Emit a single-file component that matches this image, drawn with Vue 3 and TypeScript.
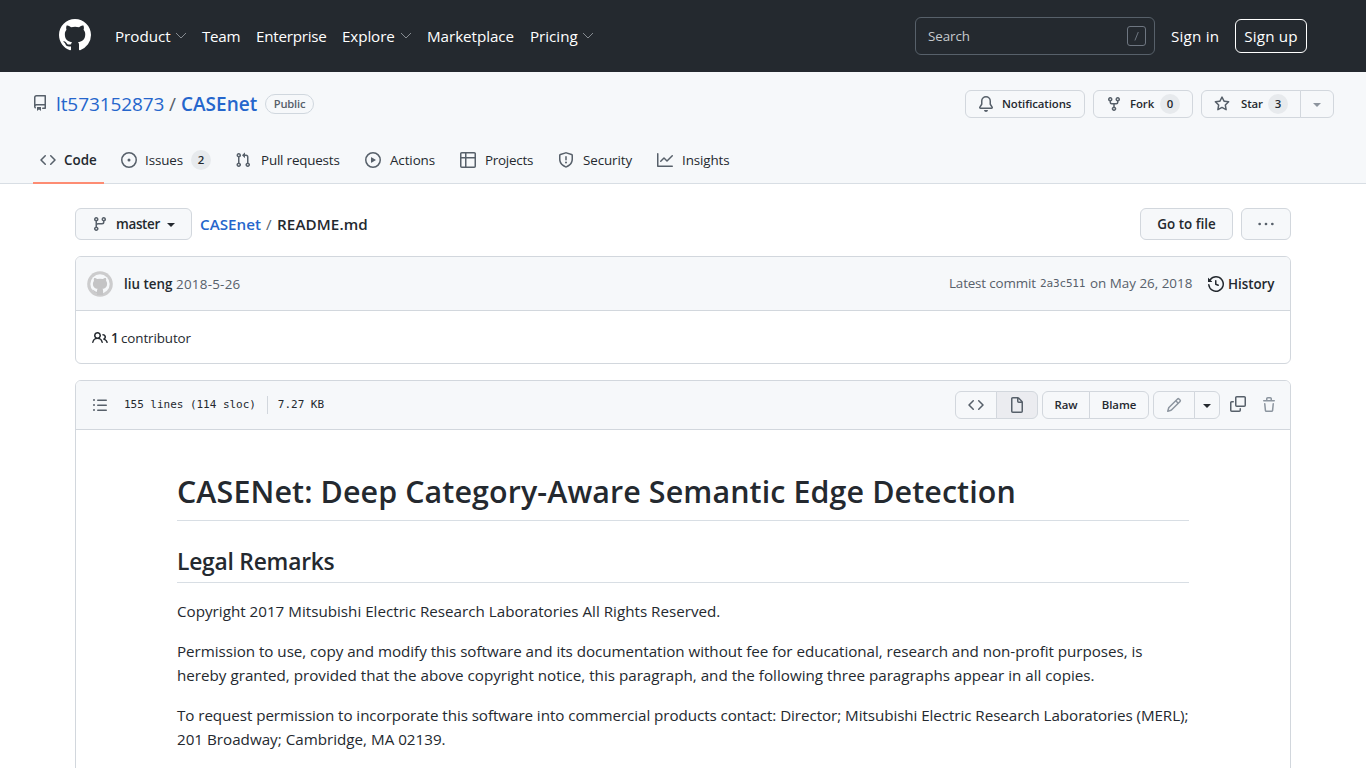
<script setup lang="ts">
import { h, type FunctionalComponent } from 'vue'

const paths: Record<string, string> = {
  mark: 'M8 0C3.58 0 0 3.58 0 8c0 3.54 2.29 6.53 5.47 7.59.4.07.55-.17.55-.38 0-.19-.01-.82-.01-1.49-2.01.37-2.53-.49-2.69-.94-.09-.23-.48-.94-.82-1.13-.28-.15-.68-.52-.01-.53.63-.01 1.08.58 1.23.82.72 1.21 1.87.87 2.33.66.07-.52.28-.87.51-1.07-1.78-.2-3.64-.89-3.64-3.95 0-.87.31-1.59.82-2.15-.08-.2-.36-1.02.08-2.12 0 0 .67-.21 2.2.82.64-.18 1.32-.27 2-.27.68 0 1.36.09 2 .27 1.53-1.04 2.2-.82 2.2-.82.44 1.1.16 1.92.08 2.12.51.56.82 1.27.82 2.15 0 3.07-1.87 3.75-3.65 3.95.29.25.54.73.54 1.48 0 1.07-.01 1.93-.01 2.2 0 .21.15.46.55.38A8.013 8.013 0 0016 8c0-4.42-3.58-8-8-8z',
  repo: 'M2 2.5A2.5 2.5 0 014.5 0h8.75a.75.75 0 01.75.75v12.5a.75.75 0 01-.75.75h-2.5a.75.75 0 110-1.5h1.75v-2h-8a1 1 0 00-.714 1.7.75.75 0 01-1.072 1.05A2.495 2.495 0 012 11.5v-9zm10.5-1V9h-8c-.356 0-.694.074-1 .208V2.5a1 1 0 011-1h8zM5 12.25v3.25a.25.25 0 00.4.2l1.45-1.087a.25.25 0 01.3 0L8.6 15.7a.25.25 0 00.4-.2v-3.25a.25.25 0 00-.25-.25h-3.5a.25.25 0 00-.25.25z',
  code: 'M4.72 3.22a.75.75 0 011.06 1.06L2.06 8l3.72 3.72a.75.75 0 11-1.06 1.06L.47 8.53a.75.75 0 010-1.06l4.25-4.25zm6.56 0a.75.75 0 10-1.06 1.06L13.94 8l-3.72 3.72a.75.75 0 101.06 1.06l4.25-4.25a.75.75 0 000-1.06l-4.25-4.25z',
  issue: 'M8 9.5a1.5 1.5 0 100-3 1.5 1.5 0 000 3zM8 0a8 8 0 100 16A8 8 0 008 0zM1.5 8a6.5 6.5 0 1113 0 6.5 6.5 0 01-13 0z',
  pull: 'M7.177 3.073L9.573.677A.25.25 0 0110 .854v4.792a.25.25 0 01-.427.177L7.177 3.427a.25.25 0 010-.354zM3.75 2.5a.75.75 0 100 1.5.75.75 0 000-1.5zm-2.25.75a2.25 2.25 0 113 2.122v5.256a2.251 2.251 0 11-1.5 0V5.372A2.25 2.25 0 011.5 3.25zM11 2.5h-1V4h1a1 1 0 011 1v5.628a2.251 2.251 0 101.5 0V5A2.5 2.5 0 0011 2.5zm1 10.25a.75.75 0 111.5 0 .75.75 0 01-1.5 0zM3.75 12a.75.75 0 100 1.5.75.75 0 000-1.5z',
  play: 'M1.5 8a6.5 6.5 0 1113 0 6.5 6.5 0 01-13 0zM8 0a8 8 0 100 16A8 8 0 008 0zM6.379 5.227A.25.25 0 006 5.442v5.117a.25.25 0 00.379.214l4.264-2.559a.25.25 0 000-.428L6.379 5.227z',
  table: 'M0 1.75C0 .784.784 0 1.75 0h12.5C15.216 0 16 .784 16 1.75v12.5A1.75 1.75 0 0114.25 16H1.75A1.75 1.75 0 010 14.25V1.75zM1.5 6.5v7.75c0 .138.112.25.25.25H5v-8H1.5zM5 5H1.5V1.75a.25.25 0 01.25-.25H5V5zm1.5 1.5v8h7.75a.25.25 0 00.25-.25V6.5h-8zm8-1.5h-8V1.5h7.75a.25.25 0 01.25.25V5z',
  shield: 'M7.467.133a1.75 1.75 0 011.066 0l5.25 1.68A1.75 1.75 0 0115 3.48V7c0 1.566-.32 3.182-1.303 4.682-.983 1.498-2.585 2.813-5.032 3.855a1.7 1.7 0 01-1.33 0c-2.447-1.042-4.049-2.357-5.032-3.855C1.32 10.182 1 8.566 1 7V3.48a1.75 1.75 0 011.217-1.667l5.25-1.68zm.61 1.429a.25.25 0 00-.153 0l-5.25 1.68a.25.25 0 00-.174.238V7c0 1.358.275 2.666 1.057 3.86.784 1.194 2.121 2.34 4.366 3.297a.2.2 0 00.154 0c2.245-.956 3.582-2.104 4.366-3.298C13.225 9.666 13.5 8.36 13.5 7V3.48a.25.25 0 00-.174-.237l-5.25-1.68zM9 10.5a1 1 0 11-2 0 1 1 0 012 0zm-.25-5.75a.75.75 0 10-1.5 0v3a.75.75 0 001.5 0v-3z',
  graph: 'M1.5 1.75a.75.75 0 00-1.5 0v12.5c0 .414.336.75.75.75h14.5a.75.75 0 000-1.5H1.5V1.75zm14.28 2.53a.75.75 0 00-1.06-1.06L10 7.94 7.53 5.47a.75.75 0 00-1.06 0L3.22 8.72a.75.75 0 001.06 1.06L7 7.06l2.47 2.47a.75.75 0 001.06 0l5.25-5.25z',
  bell: 'M8 16a2 2 0 001.985-1.75c.017-.137-.097-.25-.235-.25h-3.5c-.138 0-.252.113-.235.25A2 2 0 008 16zM8 1.5A3.5 3.5 0 004.5 5v2.947c0 .346-.102.683-.294.97l-1.703 2.556a.018.018 0 00-.003.01l.001.006c0 .002.002.004.004.006a.017.017 0 00.006.004l.007.001h10.964l.007-.001a.016.016 0 00.006-.004.016.016 0 00.004-.006l.001-.007a.017.017 0 00-.003-.01l-1.703-2.554a1.75 1.75 0 01-.294-.97V5A3.5 3.5 0 008 1.5zM3 5a5 5 0 0110 0v2.947c0 .05.015.098.042.139l1.703 2.555A1.518 1.518 0 0113.482 13H2.518a1.518 1.518 0 01-1.263-2.36l1.703-2.554A.25.25 0 003 7.947V5z',
  fork: 'M5 3.25a.75.75 0 11-1.5 0 .75.75 0 011.5 0zm0 2.122a2.25 2.25 0 10-1.5 0v.878A2.25 2.25 0 005.75 8.5h1.5v2.128a2.251 2.251 0 101.5 0V8.5h1.5a2.25 2.25 0 002.25-2.25v-.878a2.25 2.25 0 10-1.5 0v.878a.75.75 0 01-.75.75h-4.5A.75.75 0 015 6.25v-.878zm3.75 7.378a.75.75 0 11-1.5 0 .75.75 0 011.5 0zm3-8.75a.75.75 0 100-1.5.75.75 0 000 1.5z',
  star: 'M8 .25a.75.75 0 01.673.418l1.882 3.815 4.21.612a.75.75 0 01.416 1.279l-3.046 2.97.719 4.192a.75.75 0 01-1.088.791L8 12.347l-3.766 1.98a.75.75 0 01-1.088-.79l.72-4.194L.818 6.374a.75.75 0 01.416-1.28l4.21-.611L7.327.668A.75.75 0 018 .25zm0 2.445L6.615 5.5a.75.75 0 01-.564.41l-3.097.45 2.24 2.184a.75.75 0 01.216.664l-.528 3.084 2.769-1.456a.75.75 0 01.698 0l2.77 1.456-.53-3.084a.75.75 0 01.216-.664l2.24-2.183-3.096-.45a.75.75 0 01-.564-.41L8 2.694v.001z',
  branch: 'M11.75 2.5a.75.75 0 100 1.5.75.75 0 000-1.5zm-2.25.75a2.25 2.25 0 113 2.122V6A2.5 2.5 0 0110 8.5H6a1 1 0 00-1 1v1.128a2.251 2.251 0 11-1.5 0V5.372a2.25 2.25 0 111.5 0v1.836A2.492 2.492 0 016 7h4a1 1 0 001-1v-.628A2.25 2.25 0 019.5 3.25zM4.25 12a.75.75 0 100 1.5.75.75 0 000-1.5zM3.5 3.25a.75.75 0 111.5 0 .75.75 0 01-1.5 0z',
  dots: 'M.3 8a1.35 1.35 0 102.7 0 1.35 1.35 0 10-2.7 0zm6.35 0a1.35 1.35 0 102.7 0 1.35 1.35 0 10-2.7 0zM13 8a1.35 1.35 0 102.7 0A1.35 1.35 0 1013 8z',
  history: 'M1.643 3.143L.427 1.927A.25.25 0 000 2.104V5.75c0 .138.112.25.25.25h3.646a.25.25 0 00.177-.427L2.715 4.215a6.5 6.5 0 11-1.18 4.458.75.75 0 10-1.493.154 8.001 8.001 0 101.6-5.684zM7.75 4a.75.75 0 01.75.75v2.992l2.028.812a.75.75 0 01-.557 1.392l-2.5-1A.75.75 0 017 8.25v-3.5A.75.75 0 017.75 4z',
  people: 'M5.5 3.5a2 2 0 100 4 2 2 0 000-4zM2 5.5a3.5 3.5 0 115.898 2.549 5.507 5.507 0 013.034 4.084.75.75 0 11-1.482.235 4.001 4.001 0 00-7.9 0 .75.75 0 01-1.482-.236A5.507 5.507 0 013.102 8.05 3.49 3.49 0 012 5.5zM11 4a.75.75 0 100 1.5 1.5 1.5 0 01.666 2.844.75.75 0 00-.416.672v.352a.75.75 0 00.574.73c1.2.289 2.162 1.2 2.522 2.372a.75.75 0 101.434-.44 5.01 5.01 0 00-2.56-3.012A3 3 0 0011 4z',
  list: 'M2 4a1 1 0 100-2 1 1 0 000 2zm3.75-1.5a.75.75 0 000 1.5h8.5a.75.75 0 000-1.5h-8.5zm0 5a.75.75 0 000 1.5h8.5a.75.75 0 000-1.5h-8.5zm0 5a.75.75 0 000 1.5h8.5a.75.75 0 000-1.5h-8.5zM3 8a1 1 0 11-2 0 1 1 0 012 0zm-1 6a1 1 0 100-2 1 1 0 000 2z',
  file: 'M3.75 1.5a.25.25 0 00-.25.25v12.5c0 .138.112.25.25.25h8.5a.25.25 0 00.25-.25V6H9.75A1.75 1.75 0 018 4.25V1.5H3.75zm5.75.56v2.19c0 .138.112.25.25.25h2.19L9.5 2.06zM2 1.75C2 .784 2.784 0 3.75 0h5.086c.464 0 .909.184 1.237.513l3.414 3.414c.329.328.513.773.513 1.237v9.086A1.75 1.75 0 0112.25 16h-8.5A1.75 1.75 0 012 14.25V1.75z',
  pencil: 'M11.013 1.427a1.75 1.75 0 012.474 0l1.086 1.086a1.75 1.75 0 010 2.474l-8.61 8.61c-.21.21-.47.364-.756.445l-3.251.93a.75.75 0 01-.927-.928l.929-3.25a1.75 1.75 0 01.445-.758l8.61-8.61zm1.414 1.06a.25.25 0 00-.354 0L10.811 3.75l1.439 1.44 1.263-1.263a.25.25 0 000-.354l-1.086-1.086zM11.189 6.25L9.75 4.81l-6.286 6.287a.25.25 0 00-.064.108l-.558 1.953 1.953-.558a.249.249 0 00.108-.064l6.286-6.286z',
  copy: 'M5 1.75C5 .784 5.784 0 6.75 0h7.5C15.216 0 16 .784 16 1.75v7.5A1.75 1.75 0 0114.25 11h-7.5A1.75 1.75 0 015 9.25v-7.5zm1.75-.25a.25.25 0 00-.25.25v7.5c0 .138.112.25.25.25h7.5a.25.25 0 00.25-.25v-7.5a.25.25 0 00-.25-.25h-7.5zM0 6.75C0 5.784.784 5 1.75 5h1.5a.75.75 0 010 1.5h-1.5a.25.25 0 00-.25.25v7.5c0 .138.112.25.25.25h7.5a.25.25 0 00.25-.25v-1.5a.75.75 0 011.5 0v1.5A1.75 1.75 0 019.25 16h-7.5A1.75 1.75 0 010 14.25v-7.5z',
  trash: 'M6.5 1.75a.25.25 0 01.25-.25h2.5a.25.25 0 01.25.25V3h-3V1.75zm4.5 0V3h2.25a.75.75 0 010 1.5H2.75a.75.75 0 010-1.5H5V1.75C5 .784 5.784 0 6.75 0h2.5C10.216 0 11 .784 11 1.75zM4.496 6.675a.75.75 0 10-1.492.15l.66 6.6A1.75 1.75 0 005.405 15h5.19c.9 0 1.652-.681 1.741-1.576l.66-6.6a.75.75 0 00-1.492-.149l-.66 6.6a.25.25 0 01-.249.225h-5.19a.25.25 0 01-.249-.225l-.66-6.6z',
}

const Icon: FunctionalComponent<{ name: string; size?: number }> = (props) =>
  h(
    'svg',
    { width: props.size ?? 16, height: props.size ?? 16, viewBox: '0 0 16 16', fill: 'currentColor' },
    [h('path', { d: paths[props.name], 'fill-rule': 'evenodd' })],
  )
Icon.props = ['name', 'size']

interface NavLink { label: string; key: string; menu?: boolean }
const nav: NavLink[] = [
  { label: 'Product', key: 'product', menu: true },
  { label: 'Team', key: 'team' },
  { label: 'Enterprise', key: 'enterprise' },
  { label: 'Explore', key: 'explore', menu: true },
  { label: 'Marketplace', key: 'marketplace' },
  { label: 'Pricing', key: 'pricing', menu: true },
]

interface Tab { label: string; icon: string; key: string; count?: number }
const tabs: Tab[] = [
  { label: 'Code', icon: 'code', key: 'code' },
  { label: 'Issues', icon: 'issue', key: 'issues', count: 2 },
  { label: 'Pull requests', icon: 'pull', key: 'pulls' },
  { label: 'Actions', icon: 'play', key: 'actions' },
  { label: 'Projects', icon: 'table', key: 'projects' },
  { label: 'Security', icon: 'shield', key: 'security' },
  { label: 'Insights', icon: 'graph', key: 'insights' },
]
</script>

<template>
  <div class="page">
    <header class="top">
      <Icon name="mark" :size="32" class="logo" />
      <nav class="nav">
        <a v-for="n in nav" :key="n.key" :class="['nav-link', n.key]">
          <span>{{ n.label }}</span>
          <svg v-if="n.menu" class="chev" width="12" height="8" viewBox="0 0 12 8"><path d="M1 1l5 5 5-5" fill="none" stroke="currentColor" /></svg>
        </a>
      </nav>
      <div class="search">
        <span>Search</span>
        <svg width="20" height="20" viewBox="0 0 20 20" fill="none" stroke="#6e7681"><rect x=".5" y=".5" width="18" height="19" rx="2.5" /><path d="M11.3 6l-3.4 8.5" /></svg>
      </div>
      <a class="sign-in">Sign in</a>
      <a class="sign-up">Sign up</a>
    </header>

    <section class="repo-head">
      <div class="repo-row">
        <Icon name="repo" class="muted repo-icon" />
        <a class="owner">lt573152873</a>
        <span class="slash">/</span>
        <a class="repo-name">CASEnet</a>
        <span class="public">Public</span>
        <div class="repo-actions">
          <button class="btn sm notif"><Icon name="bell" /><span>Notifications</span></button>
          <button class="btn sm forks"><Icon name="fork" /><span>Fork</span><b class="count">0</b></button>
          <div class="group">
            <button class="btn sm stars"><Icon name="star" /><span>Star</span><b class="count">3</b></button>
            <button class="btn sm star-menu"><i class="caret pale"></i></button>
          </div>
        </div>
      </div>
      <nav class="tabs">
        <a v-for="t in tabs" :key="t.key" :class="['tab', t.key]">
          <Icon :name="t.icon" /><span class="tab-label">{{ t.label }}</span>
          <b v-if="t.count" class="count">{{ t.count }}</b>
        </a>
      </nav>
    </section>

    <main class="content">
      <div class="file-nav">
        <button class="btn branch"><Icon name="branch" /><span>master</span><i class="caret"></i></button>
        <div class="crumbs"><a>CASEnet</a><span class="sep">/</span><strong>README.md</strong></div>
        <button class="btn goto">Go to file</button>
        <button class="btn more"><Icon name="dots" /></button>
      </div>

      <section class="box commit">
        <div class="commit-head">
          <svg class="avatar" width="26" height="26" viewBox="0 0 26 26">
            <circle cx="13" cy="13" r="12.8" fill="#cccccd" />
            <circle cx="13" cy="13" r="9.7" fill="#f6f8fa" />
            <path fill="#c4c4c5" d="M7.2 7c1.3 0 2.3.5 3.1 1a12 12 0 0 1 5.4 0c.8-.5 1.8-1 3.1-1 .5 1.2.5 2 .2 2.7.8.9 1.1 1.8 1.1 3 0 3.6-2.1 4.8-4.7 5.1.5.5.7 1.1.7 1.900V24H10v-2.1c-2 .2-2.7-.6-3.4-1.900-.3-.5-.8-.8-1.1-1.1 1.700-.3 2.100 1.900 3.600 1.900h.9c0-1.400.1-2.200.7-3-2.600-.3-4.800-1.500-4.800-5.100 0-1.200.4-2.100 1.100-3C6.700 9 6.700 8.200 7.200 7z" />
          </svg>
          <strong class="author">liu teng</strong>
          <span class="date">2018-5-26</span>
          <div class="latest"><span class="lc">Latest commit</span><code>2a3c511</code><span class="on">on May 26, 2018</span></div>
          <a class="history"><Icon name="history" /><span>History</span></a>
        </div>
        <div class="contributors"><Icon name="people" /><strong>1</strong><span>contributor</span></div>
      </section>

      <section class="box readme">
        <div class="file-bar">
          <Icon name="list" class="muted list" />
          <span class="mono">155 lines (114 sloc)</span>
          <i class="rule"></i>
          <span class="mono">7.27 KB</span>
          <div class="file-actions">
            <div class="group view">
              <button class="btn sm w42"><Icon name="code" /></button>
              <button class="btn sm w42 selected"><Icon name="file" /></button>
            </div>
            <div class="group raw-blame">
              <button class="btn sm raw"><span>Raw</span></button>
              <button class="btn sm blame"><span>Blame</span></button>
            </div>
            <div class="group edit">
              <button class="btn sm w42 faded"><Icon name="pencil" /></button>
              <button class="btn sm drop"><i class="caret"></i></button>
            </div>
            <Icon name="copy" class="muted copy" />
            <Icon name="trash" class="trash" />
          </div>
        </div>
        <article class="doc">
          <h1>CASENet: Deep Category-Aware Semantic Edge Detection</h1>
          <h2>Legal Remarks</h2>
          <p>Copyright 2017 Mitsubishi Electric Research Laboratories All Rights Reserved.</p>
          <p><span class="snug">Permission to use, copy and modify this software and its documentation without fee for educational, research and non-profit purposes, is</span><br>hereby granted, provided that the above copyright notice, this paragraph, and the following three paragraphs appear in all copies.</p>
          <p><span class="tight">To request permission to incorporate this software into commercial products contact: Director; Mitsubishi Electric Research Laboratories (MERL);</span><br>201 Broadway; Cambridge, MA 02139.</p>
        </article>
      </section>
    </main>
  </div>
</template>

<style>
html, body { margin: 0; overflow: hidden; background: #fff; }
</style>

<style scoped>
.page { height: 768px; overflow: hidden; font-family: "Open Sans", "Noto Sans", sans-serif; font-size: 13.4px; line-height: 20px; color: #24292f; white-space: nowrap; }
* { box-sizing: border-box; }
svg { display: block; flex: none; }
.muted { color: #57606a; }

.top { height: 72px; background: #24292f; color: #fff; display: flex; align-items: center; padding-left: 59px; font-size: 15.2px; }
.logo { margin-top: -3px; }
.nav { display: flex; margin-left: 24px; width: 800px; }
.nav-link { display: flex; align-items: center; letter-spacing: -.03px; }
.nav-link.product { width: 87px; }
.nav-link.team { width: 54px; letter-spacing: -.3px; }
.nav-link.enterprise { width: 86px; letter-spacing: -.25px; }
.nav-link.explore { width: 85px; letter-spacing: -.1px; }
.nav-link.marketplace { width: 103px; letter-spacing: -.05px; }
.nav-link.pricing { width: 64px; }
.nav-link .chev { margin-left: auto; color: #868b91; }
.product .chev, .explore .chev { margin-right: 15px; }
.pricing .chev { margin-right: 0; }
.search { width: 240px; height: 38px; border: 1px solid #57606a; border-radius: 6px; display: flex; align-items: center; justify-content: space-between; padding: 0 7px 0 12px; color: #c6cace; font-size: 13.4px; letter-spacing: -.1px; flex: none; }
.sign-in { margin-left: 16px; width: 64px; flex: none; letter-spacing: .2px; }
.sign-up { width: 72px; height: 34px; flex: none; border: 1px solid #fff; border-radius: 6px; text-align: center; line-height: 32px; letter-spacing: .15px; }

.repo-head { height: 112px; background: #f6f8fa; border-bottom: 1px solid #d8dee4; }
.repo-row { display: flex; align-items: center; height: 64px; padding: 0 32px; }
.repo-icon { margin-top: -2px; }
.owner, .repo-name, .slash { font-size: 19px; }
.owner { color: #2566cc; margin-left: 8px; width: 109px; letter-spacing: -.1px; }
.slash { color: #57606a; margin-left: 4px; width: 12px; }
.repo-name { color: #2566cc; font-weight: 600; width: 77px; }
.public { margin-left: 7px; width: 49px; height: 20px; border: 1px solid #d0d7de; border-radius: 10px; text-align: center; font-size: 11.2px; line-height: 18px; color: #57606a; font-weight: 600; letter-spacing: -.2px; }
.repo-actions { margin-left: auto; display: flex; gap: 8px; }

.btn { font: inherit; font-weight: 600; color: #24292f; background: #f6f8fa; border: 1px solid #d2d7dd; border-radius: 6px; height: 32px; padding: 0; display: flex; align-items: center; justify-content: center; flex: none; }
.btn svg { color: #57606a; }
.btn.sm { height: 28px; font-size: 11.4px; }
.btn.notif, .btn.forks, .btn.stars { justify-content: flex-start; padding-left: 12px; letter-spacing: -.1px; }
.btn.notif { width: 120px; }
.notif span { margin-left: 8px; }
.btn.forks { width: 100px; }
.forks span { margin-left: 8px; width: 30px; text-align: left; }
.btn.stars { width: 100px; }
.stars span { margin-left: 11px; width: 27px; text-align: left; }
.btn.star-menu { width: 34px; }
.count { display: block; width: 20px; height: 20px; border-radius: 10px; background: #e7eaed; text-align: center; font-size: 11.4px; line-height: 20px; font-weight: 600; letter-spacing: 0; }
.caret { border: 4px solid transparent; border-top-color: currentColor; border-bottom: 0; height: 0; width: 0; margin-top: 1px; }
.caret.pale { color: #8c949d; }
.group { display: flex; }
.group .btn:first-child { border-radius: 6px 0 0 6px; }
.group .btn:last-child { border-radius: 0 6px 6px 0; margin-left: -1px; }

.tabs { display: flex; height: 48px; padding-left: 33px; }
.tab { display: flex; align-items: center; height: 48px; padding-left: 8px; color: #57606a; flex: none; }
.tab-label { margin-left: 9px; color: #24292f; letter-spacing: -.1px; }
.tab .count { margin-left: 8px; color: #24292f; }
.tab.code { width: 71px; border-bottom: 2px solid #fd8c73; margin-right: 9px; padding: 2px 0 0 7px; }
.code .tab-label { font-weight: 600; margin-left: 8px; letter-spacing: 0; }
.tab.issues { width: 114px; }
.issues .tab-label { width: 38px; margin-left: 8px; }
.tab.pulls { width: 130px; }
.pulls .tab-label { margin-left: 10px; letter-spacing: -.18px; }
.tab.actions { width: 95px; }
.tab.projects { width: 98px; }
.projects .tab-label { letter-spacing: -.25px; }
.tab.security { width: 99px; }

.content { width: 1216px; margin: 24px auto 0; }
.file-nav { display: flex; align-items: center; height: 32px; }
.branch { width: 117px; }
.branch span { margin: 0 7px 0 8px; letter-spacing: -.35px; }
.crumbs { display: flex; margin-left: 8px; font-size: 15.2px; flex: 1; }
.crumbs a { color: #2566cc; width: 66px; font-weight: 600; }
.sep { width: 11px; color: #57606a; }
.crumbs strong { font-weight: 600; letter-spacing: .1px; }
.goto { width: 93px; }
.more { width: 50px; margin-left: 8px; }

.box { border: 1px solid #d2d7dd; border-radius: 6px; margin-top: 16px; background: #fff; }
.commit { height: 108px; }
.commit-head { height: 54px; background: #f6f8fa; border-bottom: 1px solid #d2d7dd; border-radius: 5px 5px 0 0; display: flex; align-items: center; padding: 0 15px 0 11px; }
.author { font-weight: 600; margin-left: 11px; width: 52px; }
.date { color: #57606a; flex: 1; letter-spacing: .25px; }
.latest { display: flex; color: #57606a; }
.lc { width: 91px; letter-spacing: -.15px; }
code { font-family: "DejaVu Sans Mono", monospace; font-size: 11px; width: 50px; letter-spacing: -.15px; margin-top: 1px; }
.on { width: 102px; }
.history { display: flex; align-items: center; margin-left: 16px; width: 67px; font-weight: 600; letter-spacing: -.05px; }
.history span { margin-left: 4px; }
.contributors { display: flex; align-items: center; height: 53px; padding-left: 16px; }
.contributors strong { margin-left: 3px; width: 10px; font-weight: 600; }
.contributors span { letter-spacing: -.1px; }

.readme { height: 420px; border-radius: 6px 6px 0 0; }
.file-bar { height: 49px; background: #f6f8fa; border-bottom: 1px solid #d2d7dd; border-radius: 5px 5px 0 0; display: flex; align-items: center; padding: 0 15px 0 16px; }
.list { margin-right: 16px; }
.mono { font-family: "DejaVu Sans Mono", monospace; font-size: 11px; letter-spacing: -.03px; }
.rule { width: 1px; height: 18px; background: #d2d7dd; margin: 0 10px 0 11px; }
.file-actions { display: flex; margin-left: auto; align-items: center; }
.w42 { width: 42px; }
.selected.btn { background: #ebecf0; }
.raw-blame { margin-left: 4px; }
.raw { width: 48px; }
.blame { width: 60px; }
.edit { margin-left: 4px; }
.faded svg { color: #8c959f; }
.drop { width: 26px; }
.copy { margin-left: 10px; margin-top: -3px; }
.trash { margin-left: 15px; margin-right: -2px; color: #8c959f; }

.doc { padding: 46px 101px; color: #24292f; }
h1 { margin: 0; height: 45px; font-size: 30.4px; line-height: 32px; font-weight: 600; letter-spacing: .11px; border-bottom: 1px solid #d8dee4; }
h2 { margin: 24px 0 16px; height: 38px; font-size: 22.8px; line-height: 34px; font-weight: 600; letter-spacing: -.22px; border-bottom: 1px solid #d8dee4; }
p { margin: 0 0 16px; font-size: 15.2px; line-height: 24px; }
.snug { letter-spacing: -.043px; }
.tight { letter-spacing: -.067px; }
</style>
